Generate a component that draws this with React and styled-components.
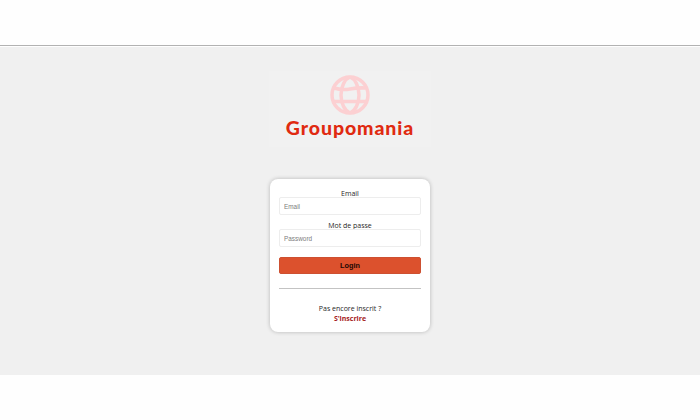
import React from 'react';
import styled, { createGlobalStyle } from 'styled-components';

const GlobalStyle = createGlobalStyle`
  * { box-sizing: border-box; }
  body { margin: 0; background: #fefefe; }
`;

const Page = styled.div`
  height: 420px;
  display: flex;
  flex-direction: column;
  overflow: hidden;
  font-family: 'Open Sans', 'Noto Sans', sans-serif;
  color: #262626;
`;

const TopBar = styled.header`
  height: 46px;
  flex: none;
  border-bottom: 1px solid #b2b2b2;
  margin-bottom: 1px;
`;

const Main = styled.main`
  height: 328px;
  flex: none;
  background: #f0f0f0;
  display: flex;
  flex-direction: column;
  align-items: center;
`;

const Brand = styled.div`
  width: 162px;
  height: 76px;
  margin-top: 24px;
  background: #f1f1f1;
  display: flex;
  flex-direction: column;
  align-items: center;
  padding-top: 4px;
`;

const Globe = styled.svg`
  width: 40px;
  height: 40px;
  flex: none;
  fill: none;
  stroke: #fcd0d2;
  stroke-width: 3.5;
`;

const Title = styled.h1`
  margin: 0;
  font: 900 19.5px/26px Lato, sans-serif;
  letter-spacing: 0.9px;
  white-space: nowrap;
  color: #e02a10;
`;

const Card = styled.form`
  width: 160px;
  height: 153px;
  margin-top: 32px;
  padding: 10px 9px 0;
  border-radius: 8px;
  background: #fff;
  box-shadow: 0 0 4px rgba(0, 0, 0, 0.24);
  display: flex;
  flex-direction: column;
`;

const Label = styled.label`
  height: 9px;
  font-size: 7px;
  line-height: 9px;
  text-align: center;
`;

const Input = styled.input`
  width: 142px;
  height: 18px;
  margin: -1px 0 6px;
  padding: 0 4px;
  border: 1px solid #ededed;
  border-radius: 2px;
  outline: none;
  background: transparent;
  font: 6.4px 'Liberation Sans', sans-serif;
  &::placeholder { color: #7d7d7d; opacity: 1; }
`;

const Submit = styled.button`
  width: 142px;
  height: 17px;
  margin-top: 4px;
  padding: 0;
  border: 1px solid #cd5031;
  border-radius: 2px;
  background: #dc512d;
  color: #210804;
  font: bold 7.3px/15px 'Liberation Sans', sans-serif;
`;

const Divider = styled.hr`
  width: 142px;
  height: 1px;
  margin: 14px 0;
  border: 0;
  background: #c3c3c3;
`;

const Note = styled.div`
  margin-top: 1px;
  font-size: 7px;
  line-height: 10px;
  text-align: center;
`;

const SignUp = styled.a`
  display: block;
  color: #a51b22;
  font-weight: 700;
`;

export default function App() {
  return (
    <Page>
      <GlobalStyle />
      <TopBar />
      <Main>
        <Brand>
          <Globe viewBox="0 0 40 40" aria-hidden="true">
            <circle cx="20" cy="20" r="18" />
            <path d="M20 2C15 4 11 11 11 20S15 36 20 38M20 2C25 4 29 11 29 20S25 36 20 38" />
            <path d="M4 13Q12 15.5 20 14T36 13M4 26.5H36" />
          </Globe>
          <Title>Groupomania</Title>
        </Brand>
        <Card>
          <Label htmlFor="email">Email</Label>
          <Input id="email" type="email" placeholder="Email" />
          <Label htmlFor="password">Mot de passe</Label>
          <Input id="password" type="password" placeholder="Password" />
          <Submit type="button">Login</Submit>
          <Divider />
          <Note>
            Pas encore inscrit ?<SignUp>S'inscrire</SignUp>
          </Note>
        </Card>
      </Main>
    </Page>
  );
}
